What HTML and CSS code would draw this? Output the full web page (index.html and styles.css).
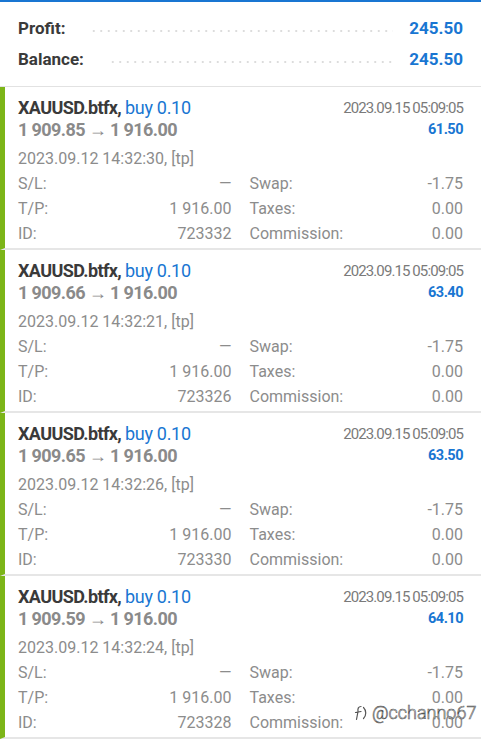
FILE: index.html
```
<!DOCTYPE html>
<html lang="en">
<head>
    <meta charset="UTF-8">
    <meta name="viewport" content="width=device-width, initial-scale=1.0">
    <title>History</title>
    <link rel="stylesheet" href="styles.css">
</head>
<body>
    <div class="summary">
        <div class="summary-row">
            <span class="summary-label">Profit:</span>
            <span class="dots"></span>
            <span class="summary-value">245.50</span>
        </div>
        <div class="summary-row">
            <span class="summary-label">Balance:</span>
            <span class="dots"></span>
            <span class="summary-value">245.50</span>
        </div>
    </div>

    <div class="deal">
        <div class="deal-head">
            <div>
                <div class="title">XAUUSD.btfx, <span class="type">buy 0.10</span></div>
                <div class="prices">1 909.85 → 1 916.00</div>
            </div>
            <div class="head-right">
                <div class="close-time">2023.09.15 05:09:05</div>
                <div class="profit">61.50</div>
            </div>
        </div>
        <div class="open-time">2023.09.12 14:32:30, [tp]</div>
        <div class="details">
            <div class="field"><span>S/L:</span><span>—</span></div>
            <div class="field"><span>Swap:</span><span>-1.75</span></div>
            <div class="field"><span>T/P:</span><span>1 916.00</span></div>
            <div class="field"><span>Taxes:</span><span>0.00</span></div>
            <div class="field"><span>ID:</span><span>723332</span></div>
            <div class="field"><span>Commission:</span><span>0.00</span></div>
        </div>
    </div>

    <div class="deal">
        <div class="deal-head">
            <div>
                <div class="title">XAUUSD.btfx, <span class="type">buy 0.10</span></div>
                <div class="prices">1 909.66 → 1 916.00</div>
            </div>
            <div class="head-right">
                <div class="close-time">2023.09.15 05:09:05</div>
                <div class="profit">63.40</div>
            </div>
        </div>
        <div class="open-time">2023.09.12 14:32:21, [tp]</div>
        <div class="details">
            <div class="field"><span>S/L:</span><span>—</span></div>
            <div class="field"><span>Swap:</span><span>-1.75</span></div>
            <div class="field"><span>T/P:</span><span>1 916.00</span></div>
            <div class="field"><span>Taxes:</span><span>0.00</span></div>
            <div class="field"><span>ID:</span><span>723326</span></div>
            <div class="field"><span>Commission:</span><span>0.00</span></div>
        </div>
    </div>

    <div class="deal">
        <div class="deal-head">
            <div>
                <div class="title">XAUUSD.btfx, <span class="type">buy 0.10</span></div>
                <div class="prices">1 909.65 → 1 916.00</div>
            </div>
            <div class="head-right">
                <div class="close-time">2023.09.15 05:09:05</div>
                <div class="profit">63.50</div>
            </div>
        </div>
        <div class="open-time">2023.09.12 14:32:26, [tp]</div>
        <div class="details">
            <div class="field"><span>S/L:</span><span>—</span></div>
            <div class="field"><span>Swap:</span><span>-1.75</span></div>
            <div class="field"><span>T/P:</span><span>1 916.00</span></div>
            <div class="field"><span>Taxes:</span><span>0.00</span></div>
            <div class="field"><span>ID:</span><span>723330</span></div>
            <div class="field"><span>Commission:</span><span>0.00</span></div>
        </div>
    </div>

    <div class="deal">
        <div class="deal-head">
            <div>
                <div class="title">XAUUSD.btfx, <span class="type">buy 0.10</span></div>
                <div class="prices">1 909.59 → 1 916.00</div>
            </div>
            <div class="head-right">
                <div class="close-time">2023.09.15 05:09:05</div>
                <div class="profit">64.10</div>
            </div>
        </div>
        <div class="open-time">2023.09.12 14:32:24, [tp]</div>
        <div class="details">
            <div class="field"><span>S/L:</span><span>—</span></div>
            <div class="field"><span>Swap:</span><span>-1.75</span></div>
            <div class="field"><span>T/P:</span><span>1 916.00</span></div>
            <div class="field"><span>Taxes:</span><span>0.00</span></div>
            <div class="field"><span>ID:</span><span>723328</span></div>
            <div class="field"><span>Commission:</span><span>0.00</span></div>
        </div>
    </div>

    <!-- watermark over the last card -->
    <div class="watermark">
        <svg width="18" height="18" viewBox="0 0 18 18">
            <path d="M9 2.5 C6.5 2.5 5.5 4.5 6 7.5 L4.5 15.5 M3.5 8.5 L9 7.5 M11.5 3.5 C14.5 6.5 14.5 11.5 11.5 14.5" fill="none" stroke="#555" stroke-width="1.2" stroke-linecap="round"/>
        </svg>
        <span>@cchanno67</span>
    </div>
</body>
</html>
```

FILE: styles.css
```
body {
    margin: 0;
    padding: 0;
    font-family: Roboto, "Liberation Sans", sans-serif;
    background-color: #ffffff;
    color: #333;
    border-top: 2px solid #1976d2;
    position: relative;
    min-height: 741px;
}

.summary {
    padding: 10px 18px 12px 18px;
    border-bottom: 1px solid #e2e2e2;
}

.summary-row {
    display: flex;
    align-items: center;
    height: 31px;
}

.summary-label {
    font-size: 17px;
    font-weight: bold;
    color: #3a3a3a;
}

.dots {
    flex: 1;
    height: 4px;
    margin: 7px 16px 0 25px;
    background-image: radial-gradient(circle, #dcdcdc 0.9px, transparent 1.2px);
    background-size: 7.5px 4px;
    background-position: 0 0;
}

.summary-value {
    font-size: 17px;
    font-weight: bold;
    color: #1976d2;
}

.deal {
    border-left: 5px solid #7cb518;
    border-bottom: 2px solid #e6e6e6;
    padding: 10px 18px 2px 13px;
}

.deal-head {
    display: flex;
    justify-content: space-between;
}

.title {
    font-size: 18px;
    line-height: 22px;
    font-weight: bold;
    color: #3a3a3a;
    letter-spacing: -0.6px;
}

.type {
    font-weight: normal;
    color: #1976d2;
    letter-spacing: -0.3px;
}

.prices {
    font-size: 18px;
    line-height: 21px;
    font-weight: bold;
    color: #8a8a8a;
    letter-spacing: -0.6px;
}

.head-right {
    text-align: right;
}

.close-time {
    font-size: 15px;
    line-height: 22px;
    color: #7a7a7a;
    letter-spacing: -0.9px;
}

.profit {
    font-size: 14.5px;
    line-height: 21px;
    font-weight: bold;
    color: #1976d2;
    letter-spacing: -0.5px;
}

.open-time {
    margin-top: 6px;
    font-size: 16px;
    line-height: 25px;
    color: #8c8c8c;
}

.details {
    display: grid;
    grid-template-columns: 1fr 1fr;
    column-gap: 18px;
}

.field {
    display: flex;
    justify-content: space-between;
    font-size: 16px;
    line-height: 25px;
    color: #8c8c8c;
}

.watermark {
    position: absolute;
    left: 352px;
    top: 700px;
    display: flex;
    align-items: center;
    gap: 2px;
    font-size: 18px;
    font-weight: 300;
    color: #ffffff;
    -webkit-text-stroke: 0.6px #555;
}
```
